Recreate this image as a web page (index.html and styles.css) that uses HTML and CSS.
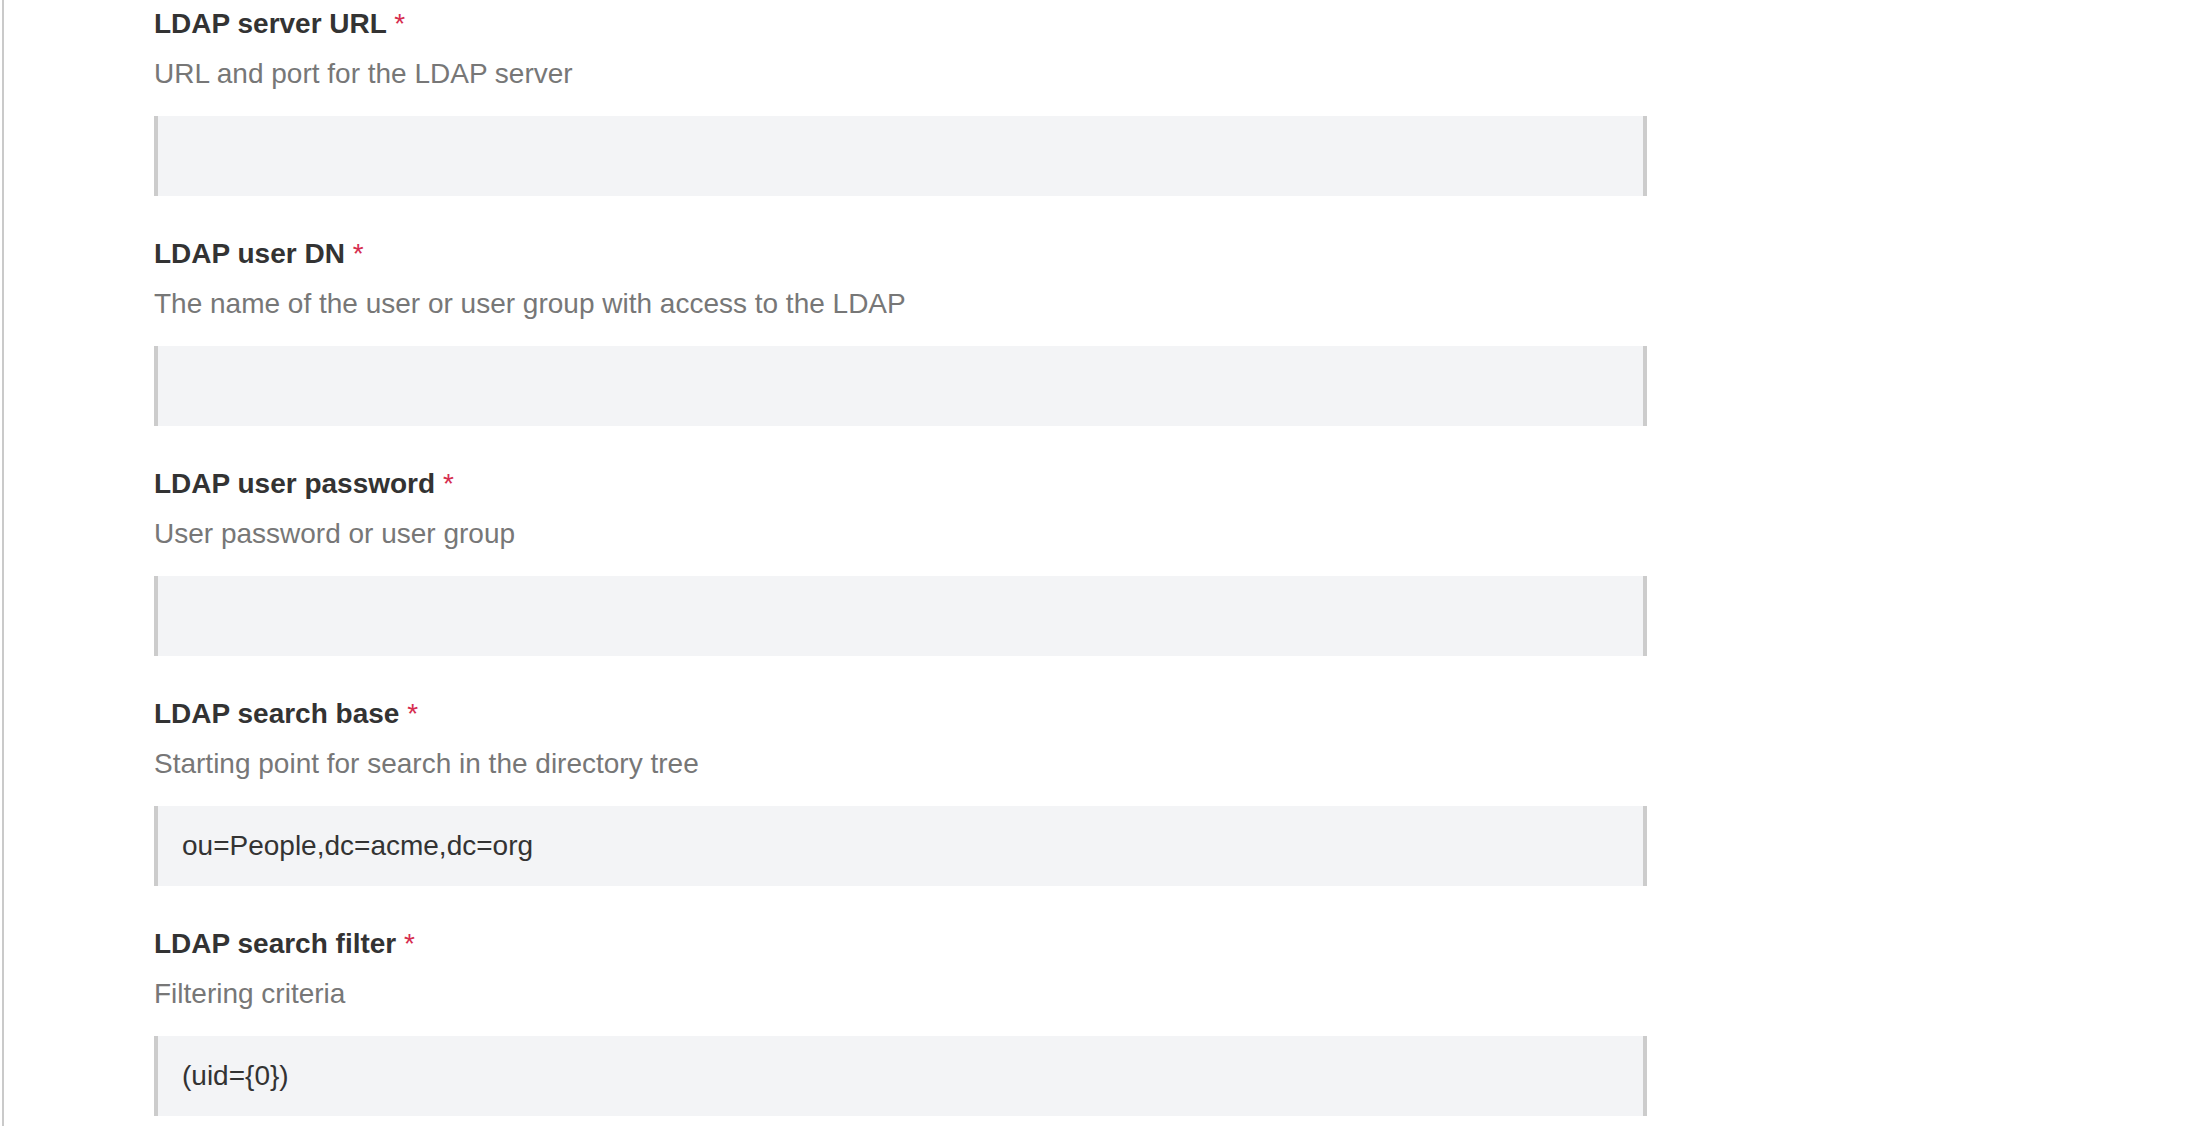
FILE: index.html
```html
<!DOCTYPE html>
<html lang="en">
<head>
    <meta charset="UTF-8">
    <meta name="viewport" content="width=device-width, initial-scale=1.0">
    <title>LDAP Settings</title>
    <link rel="stylesheet" href="styles.css">
</head>
<body>
    <div class="page">
        <form class="ldap-form">
            <div class="field">
                <label class="field-label" for="ldap-url">LDAP server URL <span class="required">*</span></label>
                <div class="field-help">URL and port for the LDAP server</div>
                <input class="field-input" type="text" id="ldap-url">
            </div>
            <div class="field">
                <label class="field-label" for="ldap-dn">LDAP user DN <span class="required">*</span></label>
                <div class="field-help">The name of the user or user group with access to the LDAP</div>
                <input class="field-input" type="text" id="ldap-dn">
            </div>
            <div class="field">
                <label class="field-label" for="ldap-password">LDAP user password <span class="required">*</span></label>
                <div class="field-help">User password or user group</div>
                <input class="field-input" type="text" id="ldap-password">
            </div>
            <div class="field">
                <label class="field-label" for="ldap-base">LDAP search base <span class="required">*</span></label>
                <div class="field-help">Starting point for search in the directory tree</div>
                <input class="field-input" type="text" id="ldap-base" value="ou=People,dc=acme,dc=org">
            </div>
            <div class="field">
                <label class="field-label" for="ldap-filter">LDAP search filter <span class="required">*</span></label>
                <div class="field-help">Filtering criteria</div>
                <input class="field-input" type="text" id="ldap-filter" value="(uid={0})">
            </div>
        </form>
    </div>
</body>
</html>
```

FILE: styles.css
```css
body {
    margin: 0;
    background-color: #fff;
    font-family: "Liberation Sans", Arial, sans-serif;
    font-size: 28px;
    color: #333;
}
.page {
    margin-left: 2px;
    border-left: 2px solid #cacaca;
    padding: 4px 0 0 150px;
    min-height: 100vh;
}
.ldap-form {
    width: 1493px;
}
.field {
    margin-bottom: 38px;
}
.field-label {
    display: block;
    line-height: 40px;
    font-weight: bold;
    color: #333;
}
.required {
    color: #d62d4f;
    font-weight: normal;
}
.field-help {
    margin-top: 10px;
    line-height: 40px;
    color: #777;
}
.field-input {
    display: block;
    box-sizing: border-box;
    width: 100%;
    height: 80px;
    margin-top: 22px;
    padding: 0 24px;
    border: none;
    border-left: 4px solid #ccc;
    border-right: 4px solid #ccc;
    background-color: #f3f4f6;
    font-family: "Liberation Sans", Arial, sans-serif;
    font-size: 28px;
    color: #333;
    outline: none;
}
```
